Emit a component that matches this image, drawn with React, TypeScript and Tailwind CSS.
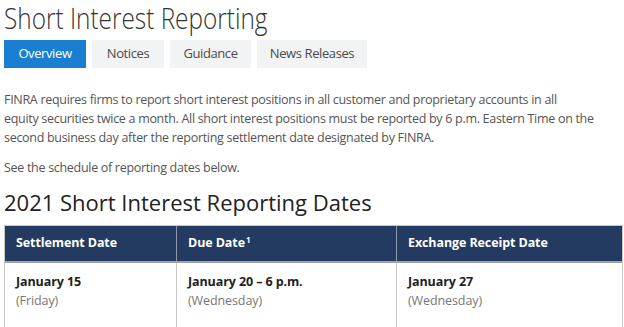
const tabs = ['Overview', 'Notices', 'Guidance', 'News Releases']
const tabWidths = ['w-[82px]', 'w-[72px]', 'w-[81px]', 'w-[110px]']

const rows = [
  {
    settle: 'January 15',
    settleDay: '(Friday)',
    due: 'January 20 – 6 p.m.',
    dueDay: '(Wednesday)',
    receipt: 'January 27',
    receiptDay: '(Wednesday)',
  },
]

function Cell({ title, sub, last }: { title: string; sub: string; last?: boolean }) {
  return (
    <div className={`pl-[11px] pt-[9px] ${last ? '' : 'border-r border-[#c8c8c8]'}`}>
      <div className="font-bold text-[#222] leading-[19px]">{title}</div>
      <div className="text-[#777] leading-[19px]">{sub}</div>
    </div>
  )
}

export default function App() {
  return (
    <div className="w-[624px] h-[327px] overflow-hidden bg-white pl-[4px] font-['Open_Sans',sans-serif]">
      <h1 className="w-[340px] text-[29px] font-light leading-[36px] text-[#333] origin-left scale-x-[0.84] whitespace-nowrap">
        Short Interest Reporting
      </h1>

      {/* Tabs */}
      <div className="flex gap-[6px] mt-[4px]">
        {tabs.map((tab, i) => (
          <div
            key={tab}
            className={`h-[28px] flex items-center justify-center text-[13px] tracking-[-0.4px] ${tabWidths[i]} ${
              i === 0 ? 'bg-[#1b7fd1] text-white' : 'bg-[#f2f3f5] text-[#4a4a4a]'
            }`}
          >
            {tab}
          </div>
        ))}
      </div>

      <div className="text-[12.5px] leading-[19px] text-[#555] tracking-[-0.3px]">
        <p className="mt-[22px] whitespace-nowrap">
          FINRA requires firms to report short interest positions in all customer and proprietary accounts in all
          <br />
          equity securities twice a month. All short interest positions must be reported by 6 p.m. Eastern Time on the
          <br />
          second business day after the reporting settlement date designated by FINRA.
        </p>
        <p className="mt-[11px]">See the schedule of reporting dates below.</p>
      </div>

      <h2 className="mt-[11px] text-[22px] leading-[28px] text-[#222]">2021 Short Interest Reporting Dates</h2>

      {/* Table */}
      <div className="mt-[9px] w-[619px] border border-[#c8c8c8] text-[12.5px] tracking-[-0.1px]">
        <div className="grid grid-cols-[172px_220px_1fr] h-[37px] bg-[#243b61] text-white font-bold border-b-2 border-[#9ba3b0]">
          <div className="flex items-center pl-[11px] border-r border-[#8d97a8]">Settlement Date</div>
          <div className="flex items-center pl-[11px] border-r border-[#8d97a8]">
            Due Date<sup className="text-[8px] ml-[1px] -top-[4px]">1</sup>
          </div>
          <div className="flex items-center pl-[11px]">Exchange Receipt Date</div>
        </div>
        {rows.map((r) => (
          <div key={r.settle} className="grid grid-cols-[172px_220px_1fr] h-[80px]">
            <Cell title={r.settle} sub={r.settleDay} />
            <Cell title={r.due} sub={r.dueDay} />
            <Cell title={r.receipt} sub={r.receiptDay} last />
          </div>
        ))}
      </div>
    </div>
  )
}
